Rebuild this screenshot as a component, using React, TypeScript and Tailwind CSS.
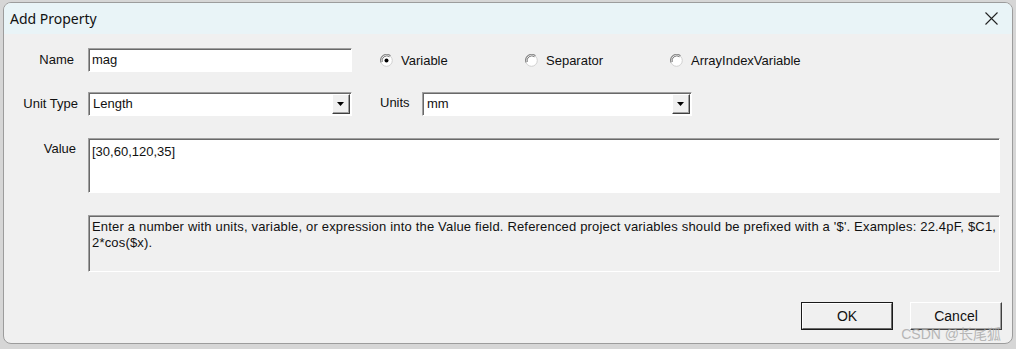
import React from "react";

const font = { fontFamily: '"Liberation Sans", Arial, sans-serif' };

function Radio({ checked, label, width }: { checked?: boolean; label: string; width: string }) {
  return (
    <div className={`flex items-center ${width}`}>
      <svg width="13" height="13" viewBox="0 0 13 13" className="mr-[8px] shrink-0">
        <circle cx="6.5" cy="6.5" r="5.8" fill="#fff" stroke="#d0d0d0" strokeWidth="1" />
        <path d="M1 8.5 A6 6 0 0 1 10.5 1.8" stroke="#8a8a8a" strokeWidth="1.1" fill="none" />
        <path d="M2.2 8 A4.8 4.8 0 0 1 9.6 2.8" stroke="#5a5a5a" strokeWidth="0.8" fill="none" />
        {checked && <circle cx="6.5" cy="6.5" r="2" fill="#000" />}
      </svg>
      <span className="text-[13px] text-[#111]">{label}</span>
    </div>
  );
}

function Select({ value, width }: { value: string; width: string }) {
  return (
    <div className={`${width} h-[24px] flex items-center bg-white border-t border-l border-t-[#a0a0a0] border-l-[#a0a0a0] border-b border-r border-b-[#fff] border-r-[#fff] shadow-[inset_1px_1px_0_#696969]`}>
      <span className="flex-1 pl-[4px] text-[13px] text-[#111]">{value}</span>
      <div className="w-[18px] h-[20px] mr-[1px] flex items-center justify-center bg-[#f0f0f0] border-t border-l border-t-[#fff] border-l-[#fff] border-b border-r border-b-[#404040] border-r-[#404040] shadow-[inset_-1px_-1px_0_#a0a0a0]">
        <svg width="8" height="5" viewBox="0 0 8 5">
          <path d="M0 0 H7 L3.5 4 Z" fill="#000" />
        </svg>
      </div>
    </div>
  );
}

export default function App() {
  return (
    <div className="w-[1016px] h-[349px] bg-[#d6d6d6] pt-[2px] pl-[3px] overflow-hidden" style={font}>
      <div className="w-[1010px] h-[342px] rounded-[8px] border border-[#9c9c9c] overflow-hidden flex flex-col bg-[#f0f0f0] relative">
        <div className="h-[31px] bg-[#e9f4f7] flex items-center justify-between pl-[6px] pr-[14px] shrink-0">
          <span className="text-[14px] text-[#111]" style={{ fontFamily: '"Noto Sans", "Open Sans", sans-serif' }}>
            Add Property
          </span>
          <svg width="13" height="13" viewBox="0 0 13 13">
            <path d="M0.5 0.5 L12.5 12.5 M12.5 0.5 L0.5 12.5" stroke="#222" strokeWidth="1.1" />
          </svg>
        </div>

        <div className="flex-1 flex flex-col pt-[14px]">
          <div className="flex items-center h-[24px]">
            <div className="w-[84px] text-right pr-[14px] text-[13px] text-[#111]">Name</div>
            <div className="w-[264px] h-[24px] flex items-center bg-white border-t border-l border-t-[#a0a0a0] border-l-[#a0a0a0] border-b border-r border-b-[#fff] border-r-[#fff] shadow-[inset_1px_1px_0_#696969] pl-[3px] text-[13px] text-[#111]">
              mag
            </div>
            <div className="flex items-center ml-[28px] pt-[1px]">
              <Radio checked label="Variable" width="w-[145px]" />
              <Radio label="Separator" width="w-[145px]" />
              <Radio label="ArrayIndexVariable" width="w-[160px]" />
            </div>
          </div>

          <div className="flex items-center h-[24px] mt-[20px]">
            <div className="w-[84px] text-right pr-[10px] text-[13px] text-[#111]">Unit Type</div>
            <Select value="Length" width="w-[264px]" />
            <div className="ml-[28px] w-[42px] text-[13px] text-[#111] -mt-[2px]">Units</div>
            <Select value="mm" width="w-[270px]" />
          </div>

          <div className="flex mt-[22px]">
            <div className="w-[84px] text-right pr-[12px] text-[13px] text-[#111] pt-[1px]">Value</div>
            <div className="w-[912px] h-[55px] bg-white border-t border-l border-t-[#a0a0a0] border-l-[#a0a0a0] border-b border-r border-b-[#fff] border-r-[#fff] shadow-[inset_1px_1px_0_#696969] pl-[3px] pt-[3px] text-[13px] text-[#111]">
              [30,60,120,35]
            </div>
          </div>

          <div className="flex mt-[22px]">
            <div className="w-[84px]" />
            <div className="w-[912px] h-[57px] bg-[#f0f0f0] border-t border-l border-t-[#a0a0a0] border-l-[#a0a0a0] border-b border-r border-b-[#fff] border-r-[#fff] shadow-[inset_1px_1px_0_#696969] pl-[3px] pt-[3px] pr-[2px] text-[13px] tracking-[0.18px] leading-[16px] text-[#111]">
              Enter a number with units, variable, or expression into the Value field. Referenced project variables should be prefixed with a '$'. Examples: 22.4pF, $C1, 2*cos($x).
            </div>
          </div>

          <div className="flex justify-end mt-[30px] pr-[10px] gap-[17px]">
            <button className="w-[92px] h-[28px] border border-[#1a1a1a] bg-[#f0f0f0] text-[14px] text-[#111]">
              <div className="w-full h-full flex items-center justify-center border-t border-l border-t-[#fff] border-l-[#fff] border-b border-r border-b-[#696969] border-r-[#696969]">
                OK
              </div>
            </button>
            <button className="w-[92px] h-[28px] bg-[#f0f0f0] text-[14px] text-[#111] border-t border-l border-t-[#fff] border-l-[#fff] border-b border-r border-b-[#404040] border-r-[#404040] shadow-[inset_-1px_-1px_0_#a0a0a0]">
              Cancel
            </button>
          </div>
        </div>

        <span
          className="absolute right-[11px] bottom-[1px] text-[14px] leading-[16px] text-[#a8a8a8] opacity-80 pointer-events-none"
          style={{ fontFamily: '"Liberation Sans", "Noto Sans CJK SC", sans-serif' }}
        >
          CSDN @长尾狐
        </span>
      </div>
    </div>
  );
}
